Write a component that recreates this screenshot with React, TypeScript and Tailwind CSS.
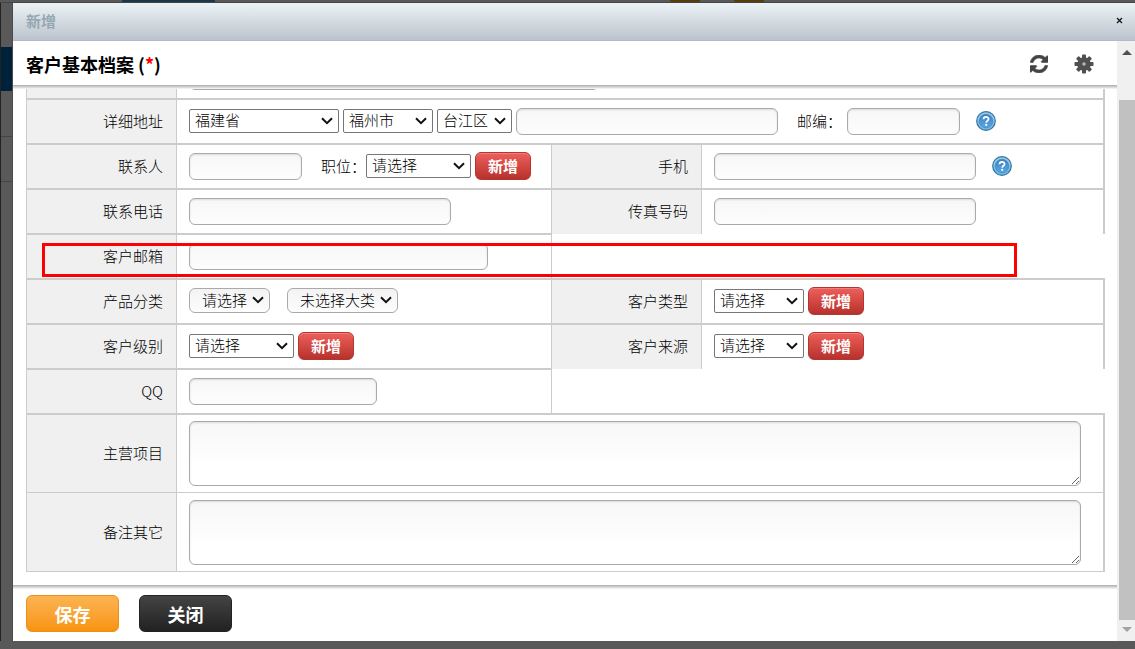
import React from "react";

const FIELD =
  "h-[27px] rounded-md border border-[#aaa] bg-linear-to-b from-[#f7f7f7] to-[#fdfdfd] px-2 shadow-[inset_0_1px_2px_rgba(0,0,0,0.12)] outline-none";
const TEXTAREA =
  "block h-[65px] w-full resize rounded-md border border-[#aaa] bg-linear-to-b from-[#f7f7f7] to-white to-70% px-2 shadow-[inset_0_1px_2px_rgba(0,0,0,0.12)] outline-none";
const SELECT = "h-6 rounded-xs border border-[#767676] bg-white pl-[5px]";
const PILL =
  "h-[25px] rounded-md border border-[#aaa] bg-linear-to-b from-[#f3f3f3] to-[#fdfdfd] pl-3";

type LabelProps = { htmlFor?: string; children: React.ReactNode; className?: string };

const Label = ({ htmlFor, children, className = "border-b-2 pb-[2px]" }: LabelProps) => (
  <label
    htmlFor={htmlFor}
    className={`flex w-[150px] shrink-0 items-center justify-end border-r border-[#ccc] bg-[#f0f0f0] pr-[13px] ${className}`}
  >
    {children}
  </label>
);

// Left half of a two column row
const Left = ({ children }: { children: React.ReactNode }) => (
  <div className="flex w-[526px] shrink-0 border-l border-[#ccc]">{children}</div>
);

const Cell = ({ children, className = "" }: { children?: React.ReactNode; className?: string }) => (
  <div className={`flex grow items-center border-[#ccc] pl-3 ${className}`}>{children}</div>
);

type SelectProps = {
  id: string;
  value: string;
  className: string;
  label?: string;
  pill?: boolean;
};

const Select = ({ id, value, className, label, pill }: SelectProps) => (
  <div className={`relative shrink-0 ${className}`}>
    <select
      id={id}
      aria-label={label}
      className={`block w-full appearance-none pb-[2px] leading-5 ${pill ? PILL : SELECT}`}
    >
      <option>{value}</option>
    </select>
    <svg
      width="12"
      height="8"
      viewBox="0 0 12 8"
      fill="none"
      stroke="#111"
      strokeWidth="2"
      className="pointer-events-none absolute top-2 right-[6px]"
    >
      <path d="M1 1.2l5 5 5-5" />
    </svg>
  </div>
);

const AddButton = () => (
  <button
    type="button"
    className="ml-1 h-7 w-14 rounded-md border border-[#b33630] bg-linear-to-b from-[#ee5f5b] to-[#b7312c] font-bold text-white shadow-[inset_0_1px_0_rgba(255,255,255,0.2)]"
  >
    新增
  </button>
);

const HelpIcon = () => (
  <svg width="20" height="20" viewBox="0 0 20 20" className="ml-4 shrink-0">
    <defs>
      <linearGradient id="help-bg" x1="0" y1="0" x2="0" y2="1">
        <stop offset="0" stopColor="#3a80c0" />
        <stop offset="1" stopColor="#5aa9e6" />
      </linearGradient>
      <linearGradient id="help-ring" x1="0" y1="0" x2="0" y2="1">
        <stop offset="0" stopColor="#9fd0ec" />
        <stop offset="1" stopColor="#6db4e0" />
      </linearGradient>
    </defs>
    <circle cx="10" cy="10" r="9.3" fill="url(#help-ring)" stroke="#34759f" strokeWidth="1.2" />
    <circle cx="10" cy="10" r="6.8" fill="url(#help-bg)" stroke="#3c7fba" strokeWidth="0.6" />
    <path
      d="M7.5 8.3c0-3.2 5.1-3 5.1-.3 0 1.8-2.4 1.8-2.4 3.7"
      fill="none"
      stroke="#fff"
      strokeWidth="1.7"
    />
    <circle cx="10.2" cy="13.8" r="1.1" fill="#fff" />
  </svg>
);

const RefreshIcon = () => (
  <svg width="18" height="18" viewBox="0 0 1536 1536" fill="#444" stroke="#444" strokeWidth="50">
    <path d="M1511 928q0 5-1 7-64 268-268 434.5T764 1536q-146 0-282.5-55T238 1324l-129 129q-19 19-45 19t-45-19T0 1408V960q0-26 19-45t45-19h448q26 0 45 19t19 45-19 45l-137 137q71 66 161 102t187 36q134 0 250-65t186-179q11-17 53-117 8-23 30-23h192q13 0 22.5 9.5t9.5 22.5zm25-800v448q0 26-19 45t-45 19h-448q-26 0-45-19t-19-45 19-45l138-138Q969 256 768 256q-134 0-250 65T332 500q-11 17-53 117-8 23-30 23H50q-13 0-22.5-9.5T18 608v-7q65-268 270-434.5T768 0q146 0 284 55.5T1297 212l130-129q19-19 45-19t45 19 19 45z" />
  </svg>
);

const GearIcon = () => (
  <svg width="20" height="20" viewBox="0 0 20 20" fill="#505050">
    {[0, 45, 90, 135].map((angle) => (
      <rect key={angle} x="8" y="0.5" width="4" height="19" rx="0.8" transform={`rotate(${angle} 10 10)`} />
    ))}
    <circle cx="10" cy="10" r="6.8" />
    <circle cx="10" cy="10" r="1.8" fill="#b5b5b5" />
  </svg>
);

const Shade = () => (
  <div className="h-1 bg-linear-to-b from-[#adadad] to-[#fafafa]" />
);

const App = () => {
  return (
    <div className="flex min-h-screen flex-col bg-[#595959] pb-2 font-['Noto_Sans_CJK_SC',sans-serif] text-[15px] leading-5 font-light text-black">
      {/* Dimmed page behind the dialog */}
      <div className="flex h-[3px] border-b border-[#444] pl-[122px]">
        <div className="w-[93px] bg-[#1c3846]" />
        <div className="ml-[455px] w-[30px] bg-[#5b3c0c]" />
        <div className="ml-[34px] w-[30px] bg-[#5b3c0c]" />
      </div>

      <div className="flex grow">
        <div className="flex w-[13px] shrink-0 flex-col border-r border-l border-r-[#4a4a4a] border-l-[#222]">
          <div className="mt-11 h-11 bg-[#00213a]" />
          <div className="h-[46px] border-b border-[#444]" />
          <div className="h-[45px] border-b border-[#444]" />
        </div>

        <div className="flex min-w-0 grow flex-col">
          <header className="flex h-[38px] items-center justify-between border-b border-[#b3bbca] bg-linear-to-b from-[#ebf3f6] to-[#bcc3cd] pr-3 pb-[2px] pl-[13px]">
            <h1 className="font-bold text-[#94a8b3]">新增</h1>
            <button type="button" aria-label="关闭窗口">
              <svg width="7" height="7" viewBox="0 0 7 7" fill="none" stroke="#111" strokeWidth="1.2">
                <path d="M1 1l5 5M6 1L1 6" />
              </svg>
            </button>
          </header>

          <div className="flex grow">
            <form className="flex min-w-0 grow flex-col bg-white">
              <div className="flex h-11 items-center justify-between pt-[2px] pr-[23px] pl-[13px]">
                <h2 className="text-[18px] leading-6 font-bold">
                  客户基本档案 (<span className="text-[#f00]">*</span>)
                </h2>
                <div className="flex items-center gap-[26px]">
                  <button type="button" aria-label="刷新">
                    <RefreshIcon />
                  </button>
                  <button type="button" aria-label="设置">
                    <GearIcon />
                  </button>
                </div>
              </div>
              <Shade />

              <div className="grow pr-3 pb-[13px] pl-[13px]">
                {/* Row scrolled partly out of view */}
                <div className="flex h-[11px] overflow-hidden border-r-2 border-l border-[#ccc]">
                  <Label>{""}</Label>
                  <div className="flex grow items-end border-b-2 border-[#ccc] pb-2 pl-3">
                    <input aria-label="客户名称" className={`${FIELD} w-[410px] shrink-0`} />
                  </div>
                </div>

                <div className="flex h-[45px] border-r-2 border-l border-[#ccc]">
                  <Label htmlFor="province">详细地址</Label>
                  <Cell className="border-b-2 pb-px">
                    <Select id="province" value="福建省" className="w-[150px]" />
                    <Select id="city" label="市" value="福州市" className="ml-1 w-[90px]" />
                    <Select id="district" label="区" value="台江区" className="ml-1 w-[75px]" />
                    <input aria-label="街道" className={`${FIELD} ml-1 w-[262px]`} />
                    <label htmlFor="zip" className="ml-[19px] w-[50px]">
                      邮编：
                    </label>
                    <input id="zip" className={`${FIELD} w-[113px]`} />
                    <HelpIcon />
                  </Cell>
                </div>

                <div className="flex h-[45px]">
                  <Left>
                    <Label htmlFor="contact">联系人</Label>
                    <Cell className="border-r border-b-2 pb-px">
                      <input id="contact" className={`${FIELD} w-[113px]`} />
                      <label htmlFor="position" className="ml-[19px] w-[45px]">
                        职位：
                      </label>
                      <Select id="position" value="请选择" className="w-[105px]" />
                      <AddButton />
                    </Cell>
                  </Left>
                  <Label htmlFor="mobile">手机</Label>
                  <Cell className="border-r-2 border-b-2 pb-px">
                    <input id="mobile" className={`${FIELD} w-[262px]`} />
                    <HelpIcon />
                  </Cell>
                </div>

                <div className="flex h-[45px]">
                  <Left>
                    <Label htmlFor="phone">联系电话</Label>
                    <Cell className="border-r border-b-2 pb-px">
                      <input id="phone" className={`${FIELD} w-[262px]`} />
                    </Cell>
                  </Left>
                  <Label htmlFor="fax" className="mb-px pb-[3px]">
                    传真号码
                  </Label>
                  <Cell className="mb-px border-r-2 pb-[2px]">
                    <input id="fax" className={`${FIELD} w-[262px]`} />
                  </Cell>
                </div>

                <div className="relative flex h-[45px]">
                  <Left>
                    <Label htmlFor="email">客户邮箱</Label>
                    <Cell className="border-r border-b-2 pb-px">
                      <input id="email" className={`${FIELD} w-[299px]`} />
                    </Cell>
                  </Left>
                  <Cell className="border-b-2" />
                  {/* Highlight round the email row */}
                  <div className="pointer-events-none absolute top-2 right-[88px] left-4 h-[34px] border-3 border-[#f00]" />
                </div>

                <div className="flex h-[45px]">
                  <Left>
                    <Label htmlFor="category">产品分类</Label>
                    <Cell className="border-r border-b-2 pb-[2px]">
                      <Select id="category" value="请选择" pill className="w-[81px]" />
                      <Select
                        id="subcategory"
                        label="产品小类"
                        value="未选择大类"
                        pill
                        className="ml-[17px] w-[111px]"
                      />
                    </Cell>
                  </Left>
                  <Label htmlFor="type">客户类型</Label>
                  <Cell className="border-r-2 border-b-2 pb-px">
                    <Select id="type" value="请选择" className="w-[90px]" />
                    <AddButton />
                  </Cell>
                </div>

                <div className="flex h-[45px]">
                  <Left>
                    <Label htmlFor="level">客户级别</Label>
                    <Cell className="border-r border-b-2 pb-px">
                      <Select id="level" value="请选择" className="w-[105px]" />
                      <AddButton />
                    </Cell>
                  </Left>
                  <Label htmlFor="source" className="mb-px pb-[3px]">
                    客户来源
                  </Label>
                  <Cell className="mb-px border-r-2 pb-[2px]">
                    <Select id="source" value="请选择" className="w-[90px]" />
                    <AddButton />
                  </Cell>
                </div>

                <div className="flex h-[45px]">
                  <Left>
                    <Label htmlFor="qq">QQ</Label>
                    <Cell className="border-r border-b-2 pb-px">
                      <input id="qq" className={`${FIELD} w-[188px]`} />
                    </Cell>
                  </Left>
                  <Cell className="border-b-2" />
                </div>

                <div className="flex border-r-2 border-b border-l border-[#ccc]">
                  <Label htmlFor="business" className="pb-[2px]">
                    主营项目
                  </Label>
                  <Cell className="py-[6px] pr-[22px]">
                    <textarea id="business" className={TEXTAREA} />
                  </Cell>
                </div>
                <div className="flex border-r-2 border-b border-l border-[#ccc]">
                  <Label htmlFor="remark" className="">
                    备注其它
                  </Label>
                  <Cell className="pt-[7px] pr-[22px] pb-[6px]">
                    <textarea id="remark" className={TEXTAREA} />
                  </Cell>
                </div>
              </div>

              <Shade />
              <div className="flex gap-5 px-[13px] pt-[6px] pb-[9px] text-[18px] font-bold text-white">
                <button
                  type="submit"
                  className="h-[37px] w-[93px] rounded-md border border-[#e8901c] bg-linear-to-b from-[#fbb450] to-[#f89406]"
                >
                  保存
                </button>
                <button
                  type="button"
                  className="h-[37px] w-[93px] rounded-md border border-[#222] bg-linear-to-b from-[#444] to-[#222]"
                >
                  关闭
                </button>
              </div>
            </form>

            {/* Scrollbar */}
            <div className="flex w-[18px] shrink-0 flex-col bg-[#f0f0f0] pl-[2px]">
              <div className="flex h-[59px] justify-center pt-[9px]">
                <svg width="10" height="5" viewBox="0 0 10 5" fill="#505050">
                  <path d="M0 5 5 0l5 5z" />
                </svg>
              </div>
              <div className="grow bg-[#c1c1c1]" />
              <div className="flex h-[21px] justify-center pt-[7px]">
                <svg width="10" height="5" viewBox="0 0 10 5" fill="#a3a3a3">
                  <path d="M0 0h10L5 5z" />
                </svg>
              </div>
            </div>
          </div>
        </div>
      </div>
    </div>
  );
};

export default App;
